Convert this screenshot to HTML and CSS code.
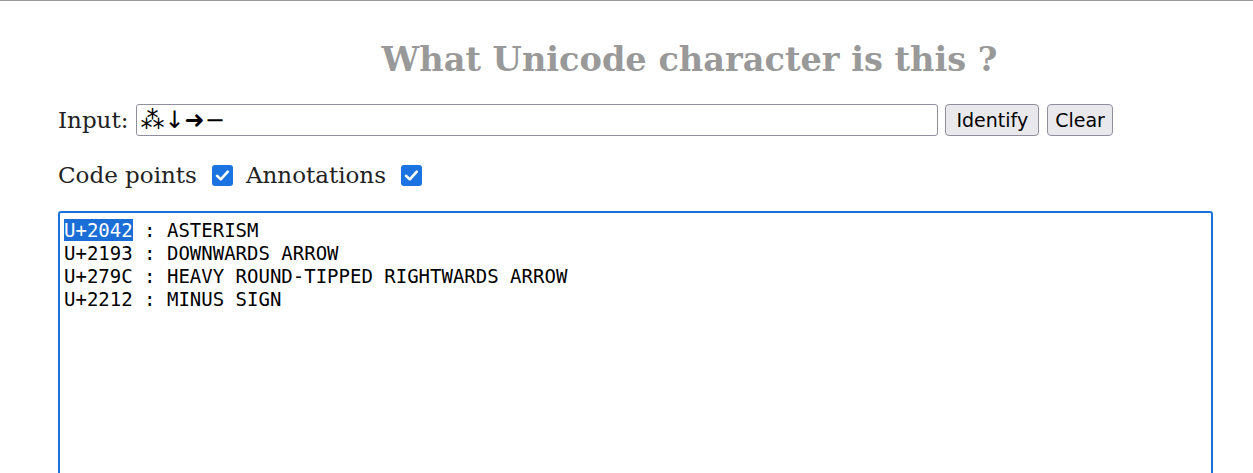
FILE: index.html
```html
<!DOCTYPE html>
<html>
<head>
<meta charset="utf-8">
<link rel="stylesheet" href="styles.css">
</head>
<body>
<div class="topline"></div>
<div class="page">
  <h1 class="title">What Unicode character is this ?</h1>
  <div class="row input-row">
    <label class="lbl" for="inp">Input:</label>
    <div class="input-box" id="inp">⁂↓➜−</div>
    <button class="btn btn-id">Identify</button>
    <button class="btn btn-clear">Clear</button>
  </div>
  <div class="row opts-row">
    <span class="lbl">Code points</span>
    <span class="check check-a"><svg viewBox="0 0 21 21" width="21" height="21"><rect x="0" y="0" width="21" height="21" rx="3" fill="#1a73e0"/><path d="M5 10.8 L8.8 14.4 L15.8 6.6" fill="none" stroke="#fff" stroke-width="2.6" stroke-linecap="round" stroke-linejoin="round"/></svg></span>
    <span class="lbl">Annotations</span>
    <span class="check check-b"><svg viewBox="0 0 21 21" width="21" height="21"><rect x="0" y="0" width="21" height="21" rx="3" fill="#1a73e0"/><path d="M5 10.8 L8.8 14.4 L15.8 6.6" fill="none" stroke="#fff" stroke-width="2.6" stroke-linecap="round" stroke-linejoin="round"/></svg></span>
  </div>
  <div class="output"><span class="sel">U+2042</span> : ASTERISM
U+2193 : DOWNWARDS ARROW
U+279C : HEAVY ROUND-TIPPED RIGHTWARDS ARROW
U+2212 : MINUS SIGN
</div>
</div>
</body>
</html>
```
FILE: styles.css
```css
html, body {
  margin: 0;
  padding: 0;
  background: #fff;
}
body {
  font-family: "DejaVu Serif", serif;
  color: #222;
  overflow: hidden;
}
.topline {
  height: 1px;
  background: #9a9a9a;
}
.page {
  padding-left: 58px;
}
.title {
  margin: 0;
  padding-top: 38px;
  padding-left: 68px;
  text-align: center;
  font-size: 33.6px;
  font-weight: bold;
  color: #999;
  line-height: 40px;
}
.row {
  display: flex;
  align-items: center;
}
.lbl {
  font-size: 23px;
  color: #222;
}
.input-row {
  margin-top: 25px;
  height: 32px;
}
.input-box {
  box-sizing: border-box;
  margin-left: 8px;
  width: 802px;
  height: 32px;
  border: 1px solid #8f8f9d;
  border-radius: 3px;
  font-family: "DejaVu Sans", sans-serif;
  font-size: 24px;
  color: #000;
  padding: 0 3px;
  line-height: 30px;
  overflow: hidden;
}
.btn {
  box-sizing: border-box;
  height: 32px;
  margin-left: 7px;
  border: 1px solid #8f8f9d;
  border-radius: 4px;
  background: #e9e9ed;
  font-family: "DejaVu Sans", sans-serif;
  font-size: 19px;
  color: #000;
}
.btn-id {
  padding: 0 10px;
}
.btn-clear {
  margin-left: 8px;
  padding: 0 7px;
}
.opts-row {
  margin-top: 23px;
  height: 32px;
}
.check {
  display: flex;
  width: 21px;
  height: 21px;
}
.check-a {
  margin-left: 15px;
  margin-right: 13px;
}
.check-b {
  margin-left: 15px;
}
.output {
  box-sizing: border-box;
  margin-top: 20px;
  width: 1155px;
  height: 300px;
  border: 2px solid #1a73d6;
  border-radius: 3px;
  padding: 6px 4px;
  font-family: "DejaVu Sans Mono", monospace;
  font-size: 19px;
  line-height: 23px;
  white-space: pre;
  color: #000;
}
.sel {
  background: #1a6ed6;
  color: #fff;
}
```
